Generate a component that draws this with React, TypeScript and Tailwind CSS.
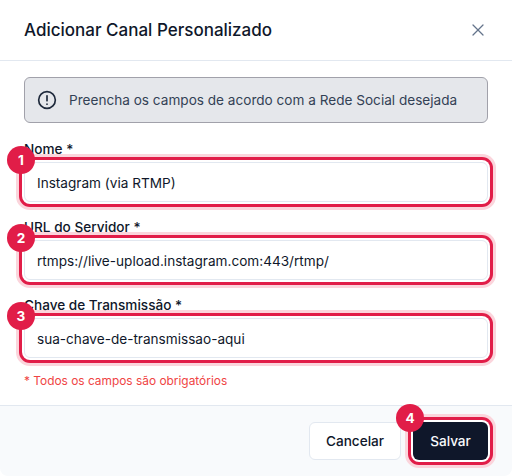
import { X } from 'lucide-react';

const fields = [
  { label: 'Nome *', value: 'Instagram (via RTMP)', step: 1 },
  { label: 'URL do Servidor *', value: 'rtmps://live-upload.instagram.com:443/rtmp/', step: 2 },
  { label: 'Chave de Transmissão *', value: 'sua-chave-de-transmissao-aqui', step: 3 },
];

const Badge = ({ n, className }: { n: number; className: string }) => (
  <span className={`absolute flex h-7 w-7 items-center justify-center rounded-full bg-[#e11d48] text-[13.6px] font-bold text-white ${className}`}>
    {n}
  </span>
);

const App = () => {
  return (
    <div className="flex h-[476px] w-[512px] flex-col overflow-hidden rounded-b-lg bg-white font-['Inter',sans-serif] text-[#0f172a]">
      <div className="flex h-[61px] items-center justify-between border-b border-[#e2e8f0] px-6">
        <h2 className="text-[17px] font-medium leading-6">Adicionar Canal Personalizado</h2>
        <X size={20} strokeWidth={1.5} className="text-[#64748b]" />
      </div>

      <div className="flex flex-1 flex-col px-6 pt-4">
        <div className="flex h-[46px] items-center gap-3 rounded-md border border-[#a1a1aa] bg-[#e5e7eb] px-3 text-[13.6px] text-[#334155]">
          <svg width="20" height="20" viewBox="0 0 24 24" fill="none" stroke="#1e293b" strokeWidth="2" strokeLinecap="round" strokeLinejoin="round">
            <circle cx="12" cy="12" r="10" />
            <path d="M12 7v6" />
            <path d="M12 17h.01" />
          </svg>
          <span>Preencha os campos de acordo com a Rede Social desejada</span>
        </div>

        <div className="mt-4 flex flex-col gap-[15px]">
          {fields.map((f) => (
            <div key={f.step} className="relative">
              <label className="block text-[13.6px] font-medium leading-5">{f.label}</label>
              <div className="mt-[3px] flex h-10 items-center rounded-md border border-[#e2e8f0] bg-white px-3 pt-[2px] text-[13.6px] shadow-[0_0_0_2px_#ffffff,0_0_0_5px_#e11d48,0_0_0_8px_#fbd5dc]">
                {f.value}
              </div>
              <Badge n={f.step} className="left-[-17px] top-[7px]" />
            </div>
          ))}
        </div>

        <p className="mt-[15px] text-[11.9px] leading-4 text-[#ef4444]">* Todos os campos são obrigatórios</p>
      </div>

      <div className="flex h-[71px] items-center justify-end gap-[12px] border-t border-[#e2e8f0] bg-[#f8fafc] px-6">
        <button className="h-[38px] w-[92px] rounded-md border border-[#e2e8f0] bg-white text-[13.6px] font-medium">Cancelar</button>
        <div className="relative">
          <button className="h-[38px] w-[75px] rounded-md bg-[#0f172a] text-[13.6px] font-medium text-[#f8fafc] shadow-[0_0_0_2px_#ffffff,0_0_0_5px_#e11d48,0_0_0_8px_#fbd5dc]">Salvar</button>
          <Badge n={4} className="left-[-17px] top-[-18px]" />
        </div>
      </div>
    </div>
  );
};

export default App;
